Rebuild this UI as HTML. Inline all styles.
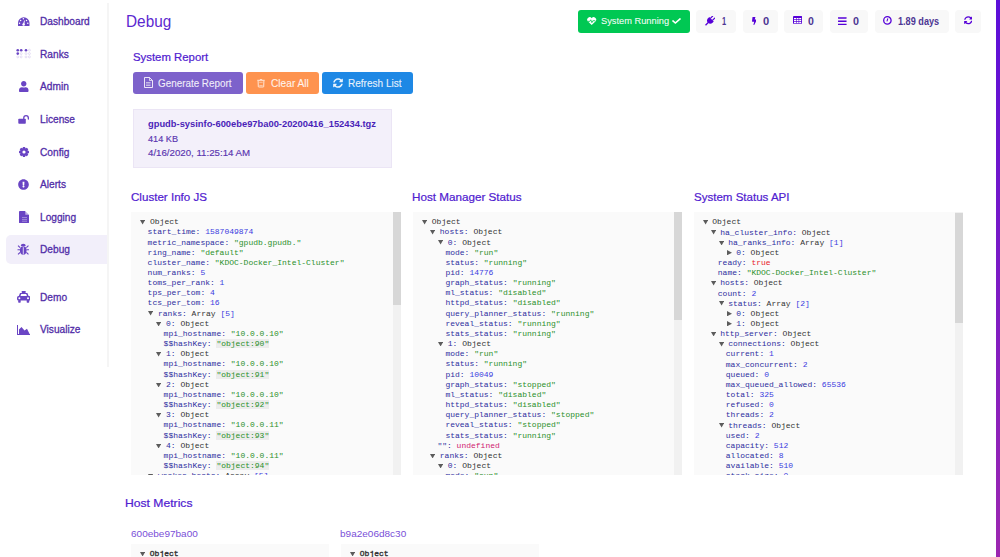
<!DOCTYPE html><html><head><meta charset="utf-8"><style>
*{margin:0;padding:0;box-sizing:border-box}
html,body{width:1000px;height:557px;overflow:hidden;background:#fff;font-family:"Liberation Sans", sans-serif}
.abs{position:absolute}
.side{position:absolute;left:107px;top:3px;width:2px;height:364px;background:#f5f5f5}
.nav{position:absolute;left:40px;font-size:10.5px;color:#512da8;white-space:nowrap;line-height:1}
.ico{position:absolute}
.btn{position:absolute;top:72px;height:21.5px;border-radius:3px;color:rgba(255,255,255,.85);font-size:10.5px;white-space:nowrap}
.badge{position:absolute;top:10.3px;height:22.4px;border-radius:4px;background:#f8f8f8;color:#4d3593;font-weight:bold;font-size:9.5px;white-space:nowrap}
.h2{position:absolute;color:#5b1fd6;font-size:12px;white-space:nowrap;line-height:1}
.panel{position:absolute;background:#fafafa;overflow:hidden}
.ln{position:absolute;font-family:"Liberation Mono", monospace;font-size:8px;white-space:pre;line-height:1}
.k{color:#2e2ea0} .s{color:#2a902a} .n{color:#3a3ae0} .b{color:#e8202a} .u{color:#d02070} .c{color:#333}
.t{color:rgba(0,0,0,.6)}
.hk{background:#ececec}
.thumb{position:absolute;background:#d7d7d7}
.track{position:absolute;background:#f1f1f1}
</style></head><body>
<div class="abs" style="left:996px;top:0;width:4px;height:557px;background:linear-gradient(#5b0fd9,#9c27b0)"></div>
<div class="side"></div>
<div class="abs" style="left:6px;top:235.2px;width:101px;height:28.5px;background:#f2effa;border-radius:5px 0 0 5px"></div>
<div class="abs" style="left:39.61px;top:15.87px;font-size:10.67px;line-height:1;white-space:nowrap;color:#512da8;font-weight:normal;transform:scaleX(0.9535);transform-origin:0 0;-webkit-text-stroke:.3px #512da8">Dashboard</div>
<div class="abs" style="left:39.61px;top:48.67px;font-size:10.67px;line-height:1;white-space:nowrap;color:#512da8;font-weight:normal;transform:scaleX(0.9535);transform-origin:0 0;-webkit-text-stroke:.3px #512da8">Ranks</div>
<div class="abs" style="left:40.40px;top:80.97px;font-size:10.67px;line-height:1;white-space:nowrap;color:#512da8;font-weight:normal;transform:scaleX(0.9535);transform-origin:0 0;-webkit-text-stroke:.3px #512da8">Admin</div>
<div class="abs" style="left:39.61px;top:113.97px;font-size:10.67px;line-height:1;white-space:nowrap;color:#512da8;font-weight:normal;transform:scaleX(0.9535);transform-origin:0 0;-webkit-text-stroke:.3px #512da8">License</div>
<div class="abs" style="left:39.92px;top:146.97px;font-size:10.67px;line-height:1;white-space:nowrap;color:#512da8;font-weight:normal;transform:scaleX(0.9535);transform-origin:0 0;-webkit-text-stroke:.3px #512da8">Config</div>
<div class="abs" style="left:40.40px;top:179.07px;font-size:10.67px;line-height:1;white-space:nowrap;color:#512da8;font-weight:normal;transform:scaleX(0.9535);transform-origin:0 0;-webkit-text-stroke:.3px #512da8">Alerts</div>
<div class="abs" style="left:39.61px;top:212.17px;font-size:10.67px;line-height:1;white-space:nowrap;color:#512da8;font-weight:normal;transform:scaleX(0.9535);transform-origin:0 0;-webkit-text-stroke:.3px #512da8">Logging</div>
<div class="abs" style="left:39.61px;top:244.47px;font-size:10.67px;line-height:1;white-space:nowrap;color:#512da8;font-weight:normal;transform:scaleX(0.9535);transform-origin:0 0;-webkit-text-stroke:.3px #512da8">Debug</div>
<div class="abs" style="left:39.61px;top:291.67px;font-size:10.67px;line-height:1;white-space:nowrap;color:#512da8;font-weight:normal;transform:scaleX(0.9535);transform-origin:0 0;-webkit-text-stroke:.3px #512da8">Demo</div>
<div class="abs" style="left:40.40px;top:323.97px;font-size:10.67px;line-height:1;white-space:nowrap;color:#512da8;font-weight:normal;transform:scaleX(0.9535);transform-origin:0 0;-webkit-text-stroke:.3px #512da8">Visualize</div>
<svg class="ico" style="left:18px;top:16.8px" width="11.5" height="9.4" viewBox="0 0 11.5 9.4" preserveAspectRatio="none" fill="#6a45c4"><path d="M0 6A5.75 5.75 0 0 1 11.5 6V8.3Q11.5 9.4 10.4 9.4H1.1Q0 9.4 0 8.3Z"/><g fill="#fff"><circle cx="5.4" cy="1.8" r=".75"/><circle cx="2.6" cy="3.4" r=".75"/><circle cx="8.5" cy="3.4" r=".75"/><circle cx="1.5" cy="6.3" r=".75"/><circle cx="9.8" cy="6.3" r=".75"/><circle cx="5.6" cy="7.6" r="1.25"/><path d="M5 7.5L6.1 3.4 6.9 3.6 6.2 7.7z"/></g></svg>
<svg class="ico" style="left:0;top:0" width="40" height="70" fill="#6a45c4"><circle cx="17.75" cy="50.2" r="1.3"/><circle cx="17.75" cy="53.6" r="1.3"/><circle cx="17.75" cy="56.9" r="1" fill="none" stroke="#6a45c4" stroke-width=".5" opacity=".3"/><circle cx="21.2" cy="50.2" r="1.3"/><circle cx="21.2" cy="53.6" r="1" fill="none" stroke="#6a45c4" stroke-width=".5" opacity=".3"/><circle cx="21.2" cy="56.9" r="1" fill="none" stroke="#6a45c4" stroke-width=".5" opacity=".3"/><circle cx="26" cy="50.2" r="1.3"/><circle cx="26" cy="53.6" r="1" fill="none" stroke="#6a45c4" stroke-width=".5" opacity=".3"/><circle cx="26" cy="56.9" r="1" fill="none" stroke="#6a45c4" stroke-width=".5" opacity=".3"/><circle cx="29.4" cy="50.2" r="1" fill="none" stroke="#6a45c4" stroke-width=".5" opacity=".3"/><circle cx="29.4" cy="53.6" r="1" fill="none" stroke="#6a45c4" stroke-width=".5" opacity=".3"/><circle cx="29.4" cy="56.9" r="1" fill="none" stroke="#6a45c4" stroke-width=".5" opacity=".3"/></svg>
<svg class="ico" style="left:19px;top:80.6px" width="9.5" height="11" viewBox="0 0 448 512" preserveAspectRatio="none" fill="#6a45c4"><path d="M224 256c70.7 0 128-57.3 128-128S294.7 0 224 0 96 57.3 96 128s57.3 128 128 128zm89.6 32h-16.7c-22.2 10.2-46.9 16-72.9 16s-50.6-5.8-72.9-16h-16.7C60.2 288 0 348.2 0 422.4V464c0 26.5 21.5 48 48 48h352c26.5 0 48-21.5 48-48v-41.6c0-74.2-60.2-134.4-134.4-134.4z"/></svg>
<svg class="ico" style="left:18px;top:113.5px" width="12" height="11" viewBox="0 0 12 11" preserveAspectRatio="none" fill="#6a45c4"><rect x=".3" y="4.8" width="7.5" height="4.9" rx=".8"/><path d="M5.75 5.2V4A2.3 2.3 0 0 1 10.35 4V5" fill="none" stroke="#6a45c4" stroke-width="1.3" stroke-linecap="round"/></svg>
<svg class="ico" style="left:17.85px;top:145.85px" width="12" height="12" viewBox="0 0 12 12" preserveAspectRatio="none" fill="#6a45c4"><circle cx="6" cy="6" r="3.9"/><rect x="4.8" y="1" width="2.4" height="3" rx=".5" transform="rotate(0 6 6)"/><rect x="4.8" y="1" width="2.4" height="3" rx=".5" transform="rotate(45 6 6)"/><rect x="4.8" y="1" width="2.4" height="3" rx=".5" transform="rotate(90 6 6)"/><rect x="4.8" y="1" width="2.4" height="3" rx=".5" transform="rotate(135 6 6)"/><rect x="4.8" y="1" width="2.4" height="3" rx=".5" transform="rotate(180 6 6)"/><rect x="4.8" y="1" width="2.4" height="3" rx=".5" transform="rotate(225 6 6)"/><rect x="4.8" y="1" width="2.4" height="3" rx=".5" transform="rotate(270 6 6)"/><rect x="4.8" y="1" width="2.4" height="3" rx=".5" transform="rotate(315 6 6)"/><circle cx="6" cy="6" r="1.6" fill="#fff"/></svg>
<svg class="ico" style="left:18.4px;top:178.9px" width="11" height="11" viewBox="0 0 512 512" preserveAspectRatio="none" fill="#6a45c4"><path d="M504 256c0 136.997-111.043 248-248 248S8 392.997 8 256C8 119.083 119.043 8 256 8s248 111.083 248 248zm-248 50c-25.405 0-46 20.595-46 46s20.595 46 46 46 46-20.595 46-46-20.595-46-46-46zm-43.673-165.346l7.418 136c.347 6.364 5.609 11.346 11.982 11.346h48.546c6.373 0 11.635-4.982 11.982-11.346l7.418-136c.375-6.874-5.098-12.654-11.982-12.654h-63.383c-6.884 0-12.356 5.78-11.981 12.654z"/></svg>
<svg class="ico" style="left:18.7px;top:211.1px" width="10" height="12.2" viewBox="0 0 10 12" preserveAspectRatio="none" fill="#6a45c4"><path d="M0 .8Q0 0 .8 0H6l4 4v7.2q0 .8-.8.8H.8Q0 12 0 11.2z"/><path d="M6.3 0v3.7H10" fill="#fff" opacity=".6"/><g fill="#fff" opacity=".45"><rect x="3" y="6" width="5" height=".8"/><rect x="3" y="7.8" width="5" height=".8"/><rect x="3" y="9.6" width="5" height=".8"/></g></svg>
<svg class="ico" style="left:17.3px;top:243.2px" width="12.5" height="12.5" viewBox="0 0 12 12" preserveAspectRatio="none" fill="#6a45c4"><ellipse cx="6" cy="7.2" rx="3.2" ry="4"/><path d="M3.6 2.8a2.4 2 0 0 1 4.8 0z"/><g stroke="#6a45c4" stroke-width="1.1" fill="none"><path d="M.5 6.5h2.5M9 6.5h2.5M1 2.5l2 2M11 2.5l-2 2M1 11l2-2M11 11l-2-2"/></g><rect x="5.6" y="4" width=".8" height="7" fill="#f2effa"/></svg>
<svg class="ico" style="left:16.9px;top:291.1px" width="13.4" height="11.7" viewBox="0 0 13.4 11.7" preserveAspectRatio="none" fill="#6a45c4"><rect x="4.7" y="0" width="4" height="2" rx=".4"/><path d="M3 2h7.4l1.4 3.5H1.6z"/><path d="M4.2 3h5l.7 2H3.5z" fill="#fff"/><rect x="0" y="5" width="13.4" height="4.5" rx="1.5"/><rect x="1.2" y="9" width="2.5" height="2.7" rx=".6"/><rect x="9.7" y="9" width="2.5" height="2.7" rx=".6"/><circle cx="2.4" cy="7.2" r="1" fill="#fff"/><circle cx="11" cy="7.2" r="1" fill="#fff"/></svg>
<svg class="ico" style="left:16.9px;top:324.5px" width="13.4" height="10" viewBox="0 0 13.4 10" preserveAspectRatio="none" fill="#6a45c4"><path d="M0 0h1v9h12.4v1H0z"/><path d="M2 9V4.5L4.5 2 7.5 5.5 10 3.8 12.5 8.8V9z"/></svg>
<div class="abs" style="left:125.60px;top:12.75px;font-size:17.07px;line-height:1;white-space:nowrap;color:#5b28d0;font-weight:normal;transform:scaleX(0.8998);transform-origin:0 0;">Debug</div>
<div class="abs" style="left:577.8px;top:10.3px;width:112.3px;height:22.4px;border-radius:3px;background:#00c853"></div>
<svg class="ico" style="left:587.2px;top:16.8px" width="9.4" height="8" viewBox="0 0 10 8.5" preserveAspectRatio="none" fill="#6a45c4"><path d="M5 8.5L.8 4.5A2.4 2.4 0 0 1 5 1.2 2.4 2.4 0 0 1 9.2 4.5z" fill="#fff"/><path d="M1 4.6h2l1-1.6 1.2 3 1-2h2.6" stroke="#00c853" stroke-width=".9" fill="none"/></svg>
<div class="abs" style="left:601.21px;top:16.89px;font-size:9.10px;line-height:1;white-space:nowrap;color:rgba(255,255,255,.92);font-weight:normal;transform:scaleX(1.0197);transform-origin:0 0;-webkit-text-stroke:.2px rgba(255,255,255,.6)">System Running</div>
<svg class="ico" style="left:671.8px;top:17px" width="9" height="8" viewBox="0 0 512 512" preserveAspectRatio="none" fill="#fff"><path d="M173.898 439.404l-166.4-166.4c-9.997-9.997-9.997-26.206 0-36.204l36.203-36.204c9.997-9.998 26.207-9.998 36.204 0L192 312.69 432.095 72.596c9.997-9.997 26.207-9.997 36.204 0l36.203 36.204c9.997 9.997 9.997 26.206 0 36.204l-294.4 294.401c-9.998 9.997-26.207 9.997-36.204-.001z"/></svg>
<div class="badge" style="left:696px;width:40.3px"></div>
<div class="badge" style="left:742.5px;width:35.1px"></div>
<div class="badge" style="left:783.9px;width:39.3px"></div>
<div class="badge" style="left:829.5px;width:38.8px"></div>
<div class="badge" style="left:874.5px;width:74.4px"></div>
<div class="badge" style="left:955.2px;width:26.3px"></div>
<svg class="ico" style="left:705.2px;top:15.8px" width="9.8" height="9.8" viewBox="1 1 12 12" preserveAspectRatio="none" fill="#5600d8"><g transform="rotate(45 7 7)"><rect x="4.5" y="-0.3" width="1.5" height="5" rx=".7"/><rect x="8" y="-0.3" width="1.5" height="5" rx=".7"/><path d="M3.1 4.2H10.9V6.3A3.9 3.9 0 0 1 3.1 6.3Z"/><rect x="6.2" y="9" width="1.6" height="5.6"/></g></svg>
<div class="abs" style="left:721.73px;top:16.53px;font-size:10.24px;line-height:1;white-space:nowrap;color:#4d3593;font-weight:bold;transform:scaleX(0.7290);transform-origin:0 0;">1</div>
<svg class="ico" style="left:751.5px;top:16.7px" width="4.8" height="8.4" viewBox="0 0 320 512" preserveAspectRatio="none" fill="#5600d8"><path d="M296 160H180.6l42.6-129.8C227.2 15 215.7 0 200 0H56C44 0 33.8 8.9 32.2 20.8l-32 240C-1.7 275.2 9.5 288 24 288h118.7L96.6 482.5c-3.6 15.2 8 29.5 23.3 29.5 8.4 0 16.4-4.4 20.8-12l176-304c9.3-15.9-2.2-36-20.7-36z"/></svg>
<div class="abs" style="left:762.65px;top:16.53px;font-size:10.24px;line-height:1;white-space:nowrap;color:#4d3593;font-weight:bold;transform:scaleX(1.0885);transform-origin:0 0;">0</div>
<svg class="ico" style="left:792.8px;top:16.3px" width="9.2" height="7.8" viewBox="0 0 9.2 7.8" preserveAspectRatio="none" fill="#5600d8"><rect width="9.2" height="7.8" rx=".9"/><rect x="1.0" y="2.0" width="2.0" height="1.25" fill="#fff"/><rect x="1.0" y="3.95" width="2.0" height="1.25" fill="#fff"/><rect x="1.0" y="5.9" width="2.0" height="1.25" fill="#fff"/><rect x="3.6" y="2.0" width="2.0" height="1.25" fill="#fff"/><rect x="3.6" y="3.95" width="2.0" height="1.25" fill="#fff"/><rect x="3.6" y="5.9" width="2.0" height="1.25" fill="#fff"/><rect x="6.2" y="2.0" width="2.0" height="1.25" fill="#fff"/><rect x="6.2" y="3.95" width="2.0" height="1.25" fill="#fff"/><rect x="6.2" y="5.9" width="2.0" height="1.25" fill="#fff"/></svg>
<div class="abs" style="left:808.27px;top:16.53px;font-size:10.24px;line-height:1;white-space:nowrap;color:#4d3593;font-weight:bold;transform:scaleX(1.0280);transform-origin:0 0;">0</div>
<svg class="ico" style="left:838.4px;top:16.6px" width="8.6" height="8.4" viewBox="0 50 448 412" preserveAspectRatio="none" fill="#5600d8"><path d="M16 132h416c8.837 0 16-7.163 16-16V76c0-8.837-7.163-16-16-16H16C7.163 60 0 67.163 0 76v40c0 8.837 7.163 16 16 16zm0 160h416c8.837 0 16-7.163 16-16v-40c0-8.837-7.163-16-16-16H16c-8.837 0-16 7.163-16 16v40c0 8.837 7.163 16 16 16zm0 160h416c8.837 0 16-7.163 16-16v-40c0-8.837-7.163-16-16-16H16c-8.837 0-16 7.163-16 16v40c0 8.837 7.163 16 16 16z"/></svg>
<div class="abs" style="left:853.26px;top:16.53px;font-size:10.24px;line-height:1;white-space:nowrap;color:#4d3593;font-weight:bold;transform:scaleX(1.0482);transform-origin:0 0;">0</div>
<svg class="ico" style="left:883.1px;top:16.15px" width="8.8" height="8.8" viewBox="0 0 8.8 8.8" preserveAspectRatio="none" fill="#5600d8"><circle cx="4.4" cy="4.4" r="3.7" fill="none" stroke="#5600d8" stroke-width="1.3"/><path d="M4.1 4.9L4.7 2.9" stroke="#5600d8" stroke-width="1.1" stroke-linecap="round" fill="none"/></svg>
<div class="abs" style="left:898.33px;top:16.53px;font-size:10.24px;line-height:1;white-space:nowrap;color:#4d3593;font-weight:bold;transform:scaleX(0.8920);transform-origin:0 0;">1.89 days</div>
<svg class="ico" style="left:963.9px;top:16.3px" width="8.5" height="8.5" viewBox="0 0 512 512" preserveAspectRatio="none" fill="#5600d8"><path d="M370.72 133.28C339.458 104.008 298.888 87.962 255.848 88c-77.458.068-144.328 53.178-162.791 126.85-1.344 5.363-6.122 9.15-11.651 9.15H24.103c-7.498 0-13.194-6.807-11.807-14.176C33.933 94.924 134.813 8 256 8c66.448 0 126.791 26.136 171.315 68.685L463.03 40.97C478.149 25.851 504 36.559 504 57.941V192c0 13.255-10.745 24-24 24H345.941c-21.382 0-32.09-25.851-16.971-40.971l41.75-41.749zM32 296h134.059c21.382 0 32.09 25.851 16.971 40.971l-41.75 41.75c31.262 29.273 71.835 45.319 114.876 45.28 77.418-.07 144.315-53.144 162.787-126.849 1.344-5.363 6.122-9.15 11.651-9.15h57.304c7.498 0 13.194 6.807 11.807 14.176C478.067 417.076 377.187 504 256 504c-66.448 0-126.791-26.136-171.315-68.685L48.97 471.03C33.851 486.149 8 475.441 8 454.059V320c0-13.255 10.745-24 24-24z"/></svg>
<div class="abs" style="left:132.84px;top:52.05px;font-size:11.52px;line-height:1;white-space:nowrap;color:#5020d0;font-weight:normal;transform:scaleX(0.9871);transform-origin:0 0;-webkit-text-stroke:.22px #5020d0">System Report</div>
<div class="btn" style="left:133px;width:110px;background:#7d62cb"></div>
<svg class="ico" style="left:143.5px;top:77px" width="9" height="11" viewBox="0 0 9 11" preserveAspectRatio="none" fill="none"><path d="M.5 .5h5l3 3v7h-8z" fill="none" stroke="rgba(255,255,255,.85)" stroke-width="1"/><path d="M5.5 .5v3h3" fill="none" stroke="rgba(255,255,255,.85)" stroke-width=".8"/><path d="M2 5.5h4.5M2 7h4.5M2 8.5h4.5" stroke="rgba(255,255,255,.7)" stroke-width=".8"/></svg>
<div class="abs" style="left:158.34px;top:78.73px;font-size:10.24px;line-height:1;white-space:nowrap;color:rgba(255,255,255,.88);font-weight:normal;transform:scaleX(0.9638);transform-origin:0 0;-webkit-text-stroke:.2px rgba(255,255,255,.6)">Generate Report</div>
<div class="btn" style="left:246.3px;width:73px;background:#fe934f"></div>
<svg class="ico" style="left:256.5px;top:78.4px" width="8" height="9.4" viewBox="0 0 8 9.4" preserveAspectRatio="none" fill="#6a45c4"><g fill="none" stroke="rgba(255,255,255,.85)"><path d="M.3 2.3H7.7" stroke-width=".9"/><path d="M2.7 2.1Q4 .2 5.3 2.1" stroke-width=".8"/><path d="M1.1 2.7L1.3 8.6Q1.3 9 1.8 9H6.2Q6.7 9 6.7 8.6L6.9 2.7" stroke-width=".9"/><path d="M2.3 4.3H5.7M2.3 7.5H5.7" stroke-width=".7" opacity=".8"/></g></svg>
<div class="abs" style="left:270.62px;top:78.73px;font-size:10.24px;line-height:1;white-space:nowrap;color:rgba(255,255,255,.88);font-weight:normal;transform:scaleX(0.9934);transform-origin:0 0;-webkit-text-stroke:.2px rgba(255,255,255,.6)">Clear All</div>
<div class="btn" style="left:322.4px;width:90.6px;background:#1e88e5"></div>
<svg class="ico" style="left:333px;top:77.5px" width="10" height="10" viewBox="0 0 512 512" preserveAspectRatio="none" fill="rgba(255,255,255,.9)"><path d="M370.72 133.28C339.458 104.008 298.888 87.962 255.848 88c-77.458.068-144.328 53.178-162.791 126.85-1.344 5.363-6.122 9.15-11.651 9.15H24.103c-7.498 0-13.194-6.807-11.807-14.176C33.933 94.924 134.813 8 256 8c66.448 0 126.791 26.136 171.315 68.685L463.03 40.97C478.149 25.851 504 36.559 504 57.941V192c0 13.255-10.745 24-24 24H345.941c-21.382 0-32.09-25.851-16.971-40.971l41.75-41.749zM32 296h134.059c21.382 0 32.09 25.851 16.971 40.971l-41.75 41.75c31.262 29.273 71.835 45.319 114.876 45.28 77.418-.07 144.315-53.144 162.787-126.849 1.344-5.363 6.122-9.15 11.651-9.15h57.304c7.498 0 13.194 6.807 11.807 14.176C478.067 417.076 377.187 504 256 504c-66.448 0-126.791-26.136-171.315-68.685L48.97 471.03C33.851 486.149 8 475.441 8 454.059V320c0-13.255 10.745-24 24-24z"/></svg>
<div class="abs" style="left:348.12px;top:78.73px;font-size:10.24px;line-height:1;white-space:nowrap;color:rgba(255,255,255,.88);font-weight:normal;transform:scaleX(0.9800);transform-origin:0 0;-webkit-text-stroke:.2px rgba(255,255,255,.6)">Refresh List</div>
<div class="abs" style="left:132.7px;top:109px;width:259px;height:59.2px;background:#f3f0fa;border:1px solid #ebe5f5"></div>
<div class="abs" style="left:148.21px;top:119.97px;font-size:9.25px;line-height:1;white-space:nowrap;color:#4a1fb8;font-weight:bold;transform:scaleX(1.0100);transform-origin:0 0;">gpudb-sysinfo-600ebe97ba00-20200416_152434.tgz</div>
<div class="abs" style="left:148.16px;top:134.43px;font-size:9.53px;line-height:1;white-space:nowrap;color:#5a35b0;font-weight:normal;transform:scaleX(0.9605);transform-origin:0 0;-webkit-text-stroke:.15px #5a35b0">414 KB</div>
<div class="abs" style="left:148.15px;top:148.97px;font-size:9.25px;line-height:1;white-space:nowrap;color:#5a35b0;font-weight:normal;transform:scaleX(1.0468);transform-origin:0 0;-webkit-text-stroke:.15px #5a35b0">4/16/2020, 11:25:14 AM</div>
<div class="abs" style="left:131.46px;top:192.01px;font-size:11.81px;line-height:1;white-space:nowrap;color:#5020d0;font-weight:normal;transform:scaleX(0.9819);transform-origin:0 0;-webkit-text-stroke:.22px #5020d0">Cluster Info JS</div>
<div class="abs" style="left:412.49px;top:192.01px;font-size:11.81px;line-height:1;white-space:nowrap;color:#5020d0;font-weight:normal;transform:scaleX(0.9898);transform-origin:0 0;-webkit-text-stroke:.22px #5020d0">Host Manager Status</div>
<div class="abs" style="left:694.24px;top:192.01px;font-size:11.81px;line-height:1;white-space:nowrap;color:#5020d0;font-weight:normal;transform:scaleX(0.9774);transform-origin:0 0;-webkit-text-stroke:.22px #5020d0">System Status API</div>
<div class="panel" style="left:131.2px;top:212px;width:269.8px;height:263px"><svg class="abs" style="left:9.10px;top:8.00px" width="5.2" height="4.5" viewBox="0 0 5.2 4.5"><path d="M0 0H5.2L2.6 4.5z" fill="#5c5c5c"/></svg><div class="ln" style="left:18.8px;top:6.20px"><span class="c">Object</span></div><div class="ln" style="left:16.4px;top:16.36px"><span class="k">start_time:</span> <span class="n">1587049874</span></div><div class="ln" style="left:16.4px;top:26.52px"><span class="k">metric_namespace:</span> <span class="s">"gpudb.gpudb."</span></div><div class="ln" style="left:16.4px;top:36.68px"><span class="k">ring_name:</span> <span class="s">"default"</span></div><div class="ln" style="left:16.4px;top:46.84px"><span class="k">cluster_name:</span> <span class="s">"KDOC-Docker_Intel-Cluster"</span></div><div class="ln" style="left:16.4px;top:57.00px"><span class="k">num_ranks:</span> <span class="n">5</span></div><div class="ln" style="left:16.4px;top:67.16px"><span class="k">toms_per_rank:</span> <span class="n">1</span></div><div class="ln" style="left:16.4px;top:77.32px"><span class="k">tps_per_tom:</span> <span class="n">4</span></div><div class="ln" style="left:16.4px;top:87.48px"><span class="k">tcs_per_tom:</span> <span class="n">16</span></div><svg class="abs" style="left:17.10px;top:99.44px" width="5.2" height="4.5" viewBox="0 0 5.2 4.5"><path d="M0 0H5.2L2.6 4.5z" fill="#5c5c5c"/></svg><div class="ln" style="left:26.8px;top:97.64px"><span class="k">ranks:</span> <span class="c">Array</span> <span class="n">[5]</span></div><svg class="abs" style="left:25.10px;top:109.60px" width="5.2" height="4.5" viewBox="0 0 5.2 4.5"><path d="M0 0H5.2L2.6 4.5z" fill="#5c5c5c"/></svg><div class="ln" style="left:34.8px;top:107.80px"><span class="k">0:</span> <span class="c">Object</span></div><div class="ln" style="left:32.4px;top:117.96px"><span class="k">mpi_hostname:</span> <span class="s">"10.0.0.10"</span></div><div class="ln" style="left:32.4px;top:128.12px"><span class="k">$$hashKey:</span> <span class="s hk">"object:90"</span></div><svg class="abs" style="left:25.10px;top:140.08px" width="5.2" height="4.5" viewBox="0 0 5.2 4.5"><path d="M0 0H5.2L2.6 4.5z" fill="#5c5c5c"/></svg><div class="ln" style="left:34.8px;top:138.28px"><span class="k">1:</span> <span class="c">Object</span></div><div class="ln" style="left:32.4px;top:148.44px"><span class="k">mpi_hostname:</span> <span class="s">"10.0.0.10"</span></div><div class="ln" style="left:32.4px;top:158.60px"><span class="k">$$hashKey:</span> <span class="s hk">"object:91"</span></div><svg class="abs" style="left:25.10px;top:170.56px" width="5.2" height="4.5" viewBox="0 0 5.2 4.5"><path d="M0 0H5.2L2.6 4.5z" fill="#5c5c5c"/></svg><div class="ln" style="left:34.8px;top:168.76px"><span class="k">2:</span> <span class="c">Object</span></div><div class="ln" style="left:32.4px;top:178.92px"><span class="k">mpi_hostname:</span> <span class="s">"10.0.0.10"</span></div><div class="ln" style="left:32.4px;top:189.08px"><span class="k">$$hashKey:</span> <span class="s hk">"object:92"</span></div><svg class="abs" style="left:25.10px;top:201.04px" width="5.2" height="4.5" viewBox="0 0 5.2 4.5"><path d="M0 0H5.2L2.6 4.5z" fill="#5c5c5c"/></svg><div class="ln" style="left:34.8px;top:199.24px"><span class="k">3:</span> <span class="c">Object</span></div><div class="ln" style="left:32.4px;top:209.40px"><span class="k">mpi_hostname:</span> <span class="s">"10.0.0.11"</span></div><div class="ln" style="left:32.4px;top:219.56px"><span class="k">$$hashKey:</span> <span class="s hk">"object:93"</span></div><svg class="abs" style="left:25.10px;top:231.52px" width="5.2" height="4.5" viewBox="0 0 5.2 4.5"><path d="M0 0H5.2L2.6 4.5z" fill="#5c5c5c"/></svg><div class="ln" style="left:34.8px;top:229.72px"><span class="k">4:</span> <span class="c">Object</span></div><div class="ln" style="left:32.4px;top:239.88px"><span class="k">mpi_hostname:</span> <span class="s">"10.0.0.11"</span></div><div class="ln" style="left:32.4px;top:250.04px"><span class="k">$$hashKey:</span> <span class="s hk">"object:94"</span></div><svg class="abs" style="left:17.10px;top:262.00px" width="5.2" height="4.5" viewBox="0 0 5.2 4.5"><path d="M0 0H5.2L2.6 4.5z" fill="#5c5c5c"/></svg><div class="ln" style="left:26.8px;top:260.20px"><span class="k">worker_hosts:</span> <span class="c">Array</span> <span class="n">[5]</span></div><div class="track" style="left:261.8px;top:0;width:8px;height:263px"></div><div class="thumb" style="left:261.8px;top:0px;width:8px;height:92.69999999999999px"></div></div>
<div class="panel" style="left:413px;top:212px;width:269px;height:263px"><svg class="abs" style="left:9.10px;top:8.00px" width="5.2" height="4.5" viewBox="0 0 5.2 4.5"><path d="M0 0H5.2L2.6 4.5z" fill="#5c5c5c"/></svg><div class="ln" style="left:18.8px;top:6.20px"><span class="c">Object</span></div><svg class="abs" style="left:17.10px;top:18.16px" width="5.2" height="4.5" viewBox="0 0 5.2 4.5"><path d="M0 0H5.2L2.6 4.5z" fill="#5c5c5c"/></svg><div class="ln" style="left:26.8px;top:16.36px"><span class="k">hosts:</span> <span class="c">Object</span></div><svg class="abs" style="left:25.10px;top:28.32px" width="5.2" height="4.5" viewBox="0 0 5.2 4.5"><path d="M0 0H5.2L2.6 4.5z" fill="#5c5c5c"/></svg><div class="ln" style="left:34.8px;top:26.52px"><span class="k">0:</span> <span class="c">Object</span></div><div class="ln" style="left:32.4px;top:36.68px"><span class="k">mode:</span> <span class="s">"run"</span></div><div class="ln" style="left:32.4px;top:46.84px"><span class="k">status:</span> <span class="s">"running"</span></div><div class="ln" style="left:32.4px;top:57.00px"><span class="k">pid:</span> <span class="n">14776</span></div><div class="ln" style="left:32.4px;top:67.16px"><span class="k">graph_status:</span> <span class="s">"running"</span></div><div class="ln" style="left:32.4px;top:77.32px"><span class="k">ml_status:</span> <span class="s">"disabled"</span></div><div class="ln" style="left:32.4px;top:87.48px"><span class="k">httpd_status:</span> <span class="s">"disabled"</span></div><div class="ln" style="left:32.4px;top:97.64px"><span class="k">query_planner_status:</span> <span class="s">"running"</span></div><div class="ln" style="left:32.4px;top:107.80px"><span class="k">reveal_status:</span> <span class="s">"running"</span></div><div class="ln" style="left:32.4px;top:117.96px"><span class="k">stats_status:</span> <span class="s">"running"</span></div><svg class="abs" style="left:25.10px;top:129.92px" width="5.2" height="4.5" viewBox="0 0 5.2 4.5"><path d="M0 0H5.2L2.6 4.5z" fill="#5c5c5c"/></svg><div class="ln" style="left:34.8px;top:128.12px"><span class="k">1:</span> <span class="c">Object</span></div><div class="ln" style="left:32.4px;top:138.28px"><span class="k">mode:</span> <span class="s">"run"</span></div><div class="ln" style="left:32.4px;top:148.44px"><span class="k">status:</span> <span class="s">"running"</span></div><div class="ln" style="left:32.4px;top:158.60px"><span class="k">pid:</span> <span class="n">10049</span></div><div class="ln" style="left:32.4px;top:168.76px"><span class="k">graph_status:</span> <span class="s">"stopped"</span></div><div class="ln" style="left:32.4px;top:178.92px"><span class="k">ml_status:</span> <span class="s">"disabled"</span></div><div class="ln" style="left:32.4px;top:189.08px"><span class="k">httpd_status:</span> <span class="s">"disabled"</span></div><div class="ln" style="left:32.4px;top:199.24px"><span class="k">query_planner_status:</span> <span class="s">"stopped"</span></div><div class="ln" style="left:32.4px;top:209.40px"><span class="k">reveal_status:</span> <span class="s">"stopped"</span></div><div class="ln" style="left:32.4px;top:219.56px"><span class="k">stats_status:</span> <span class="s">"running"</span></div><div class="ln" style="left:24.4px;top:229.72px"><span class="k">"":</span> <span class="u">undefined</span></div><svg class="abs" style="left:17.10px;top:241.68px" width="5.2" height="4.5" viewBox="0 0 5.2 4.5"><path d="M0 0H5.2L2.6 4.5z" fill="#5c5c5c"/></svg><div class="ln" style="left:26.8px;top:239.88px"><span class="k">ranks:</span> <span class="c">Object</span></div><svg class="abs" style="left:25.10px;top:251.84px" width="5.2" height="4.5" viewBox="0 0 5.2 4.5"><path d="M0 0H5.2L2.6 4.5z" fill="#5c5c5c"/></svg><div class="ln" style="left:34.8px;top:250.04px"><span class="k">0:</span> <span class="c">Object</span></div><div class="ln" style="left:32.4px;top:260.20px"><span class="k">mode:</span> <span class="s">"run"</span></div><div class="track" style="left:261px;top:0;width:8px;height:263px"></div><div class="thumb" style="left:261px;top:0px;width:8px;height:108px"></div></div>
<div class="panel" style="left:694px;top:212px;width:269.2px;height:263px"><svg class="abs" style="left:8.50px;top:8.20px" width="5.2" height="4.5" viewBox="0 0 5.2 4.5"><path d="M0 0H5.2L2.6 4.5z" fill="#5c5c5c"/></svg><div class="ln" style="left:18.2px;top:6.40px"><span class="c">Object</span></div><svg class="abs" style="left:16.50px;top:18.36px" width="5.2" height="4.5" viewBox="0 0 5.2 4.5"><path d="M0 0H5.2L2.6 4.5z" fill="#5c5c5c"/></svg><div class="ln" style="left:26.2px;top:16.56px"><span class="k">ha_cluster_info:</span> <span class="c">Object</span></div><svg class="abs" style="left:24.50px;top:28.52px" width="5.2" height="4.5" viewBox="0 0 5.2 4.5"><path d="M0 0H5.2L2.6 4.5z" fill="#5c5c5c"/></svg><div class="ln" style="left:34.2px;top:26.72px"><span class="k">ha_ranks_info:</span> <span class="c">Array</span> <span class="n">[1]</span></div><svg class="abs" style="left:32.50px;top:37.58px" width="5" height="5.3" viewBox="0 0 5 5.3"><path d="M0 0V5.3L5 2.65z" fill="#5c5c5c"/></svg><div class="ln" style="left:42.2px;top:36.88px"><span class="k">0:</span> <span class="c">Object</span></div><div class="ln" style="left:23.8px;top:47.04px"><span class="k">ready:</span> <span class="b">true</span></div><div class="ln" style="left:23.8px;top:57.20px"><span class="k">name:</span> <span class="s">"KDOC-Docker_Intel-Cluster"</span></div><svg class="abs" style="left:16.50px;top:69.16px" width="5.2" height="4.5" viewBox="0 0 5.2 4.5"><path d="M0 0H5.2L2.6 4.5z" fill="#5c5c5c"/></svg><div class="ln" style="left:26.2px;top:67.36px"><span class="k">hosts:</span> <span class="c">Object</span></div><div class="ln" style="left:23.8px;top:77.52px"><span class="k">count:</span> <span class="n">2</span></div><svg class="abs" style="left:24.50px;top:89.48px" width="5.2" height="4.5" viewBox="0 0 5.2 4.5"><path d="M0 0H5.2L2.6 4.5z" fill="#5c5c5c"/></svg><div class="ln" style="left:34.2px;top:87.68px"><span class="k">status:</span> <span class="c">Array</span> <span class="n">[2]</span></div><svg class="abs" style="left:32.50px;top:98.54px" width="5" height="5.3" viewBox="0 0 5 5.3"><path d="M0 0V5.3L5 2.65z" fill="#5c5c5c"/></svg><div class="ln" style="left:42.2px;top:97.84px"><span class="k">0:</span> <span class="c">Object</span></div><svg class="abs" style="left:32.50px;top:108.70px" width="5" height="5.3" viewBox="0 0 5 5.3"><path d="M0 0V5.3L5 2.65z" fill="#5c5c5c"/></svg><div class="ln" style="left:42.2px;top:108.00px"><span class="k">1:</span> <span class="c">Object</span></div><svg class="abs" style="left:16.50px;top:119.96px" width="5.2" height="4.5" viewBox="0 0 5.2 4.5"><path d="M0 0H5.2L2.6 4.5z" fill="#5c5c5c"/></svg><div class="ln" style="left:26.2px;top:118.16px"><span class="k">http_server:</span> <span class="c">Object</span></div><svg class="abs" style="left:24.50px;top:130.12px" width="5.2" height="4.5" viewBox="0 0 5.2 4.5"><path d="M0 0H5.2L2.6 4.5z" fill="#5c5c5c"/></svg><div class="ln" style="left:34.2px;top:128.32px"><span class="k">connections:</span> <span class="c">Object</span></div><div class="ln" style="left:31.8px;top:138.48px"><span class="k">current:</span> <span class="n">1</span></div><div class="ln" style="left:31.8px;top:148.64px"><span class="k">max_concurrent:</span> <span class="n">2</span></div><div class="ln" style="left:31.8px;top:158.80px"><span class="k">queued:</span> <span class="n">0</span></div><div class="ln" style="left:31.8px;top:168.96px"><span class="k">max_queued_allowed:</span> <span class="n">65536</span></div><div class="ln" style="left:31.8px;top:179.12px"><span class="k">total:</span> <span class="n">325</span></div><div class="ln" style="left:31.8px;top:189.28px"><span class="k">refused:</span> <span class="n">0</span></div><div class="ln" style="left:31.8px;top:199.44px"><span class="k">threads:</span> <span class="n">2</span></div><svg class="abs" style="left:24.50px;top:211.40px" width="5.2" height="4.5" viewBox="0 0 5.2 4.5"><path d="M0 0H5.2L2.6 4.5z" fill="#5c5c5c"/></svg><div class="ln" style="left:34.2px;top:209.60px"><span class="k">threads:</span> <span class="c">Object</span></div><div class="ln" style="left:31.8px;top:219.76px"><span class="k">used:</span> <span class="n">2</span></div><div class="ln" style="left:31.8px;top:229.92px"><span class="k">capacity:</span> <span class="n">512</span></div><div class="ln" style="left:31.8px;top:240.08px"><span class="k">allocated:</span> <span class="n">8</span></div><div class="ln" style="left:31.8px;top:250.24px"><span class="k">available:</span> <span class="n">510</span></div><div class="ln" style="left:31.8px;top:260.40px"><span class="k">stack_size:</span> <span class="n">0</span></div><div class="track" style="left:261.2px;top:0;width:8px;height:263px"></div><div class="thumb" style="left:261.2px;top:0.5999999999999943px;width:8px;height:110.50000000000003px"></div></div>
<div class="abs" style="left:124.85px;top:498.11px;font-size:11.81px;line-height:1;white-space:nowrap;color:#5020d0;font-weight:normal;transform:scaleX(1.0294);transform-origin:0 0;-webkit-text-stroke:.22px #5020d0">Host Metrics</div>
<div class="abs" style="left:131.33px;top:528.91px;font-size:9.67px;line-height:1;white-space:nowrap;color:#7a4fd8;font-weight:normal;transform:scaleX(1.0366);transform-origin:0 0;">600ebe97ba00</div>
<div class="abs" style="left:340.12px;top:528.91px;font-size:9.67px;line-height:1;white-space:nowrap;color:#7a4fd8;font-weight:normal;transform:scaleX(1.0366);transform-origin:0 0;">b9a2e06d8c30</div>
<div class="panel" style="left:131.2px;top:544px;width:198.3px;height:20px"><svg class="abs" style="left:8.90px;top:7.60px" width="5.2" height="4.5" viewBox="0 0 5.2 4.5"><path d="M0 0H5.2L2.6 4.5z" fill="#5c5c5c"/></svg><div class="ln" style="left:18.6px;top:5.80px"><span class="c" style="-webkit-text-stroke:.35px #333">Object</span></div></div>
<div class="panel" style="left:341.2px;top:544px;width:197.5px;height:20px"><svg class="abs" style="left:8.90px;top:7.60px" width="5.2" height="4.5" viewBox="0 0 5.2 4.5"><path d="M0 0H5.2L2.6 4.5z" fill="#5c5c5c"/></svg><div class="ln" style="left:18.6px;top:5.80px"><span class="c" style="-webkit-text-stroke:.35px #333">Object</span></div></div>
</body></html>
